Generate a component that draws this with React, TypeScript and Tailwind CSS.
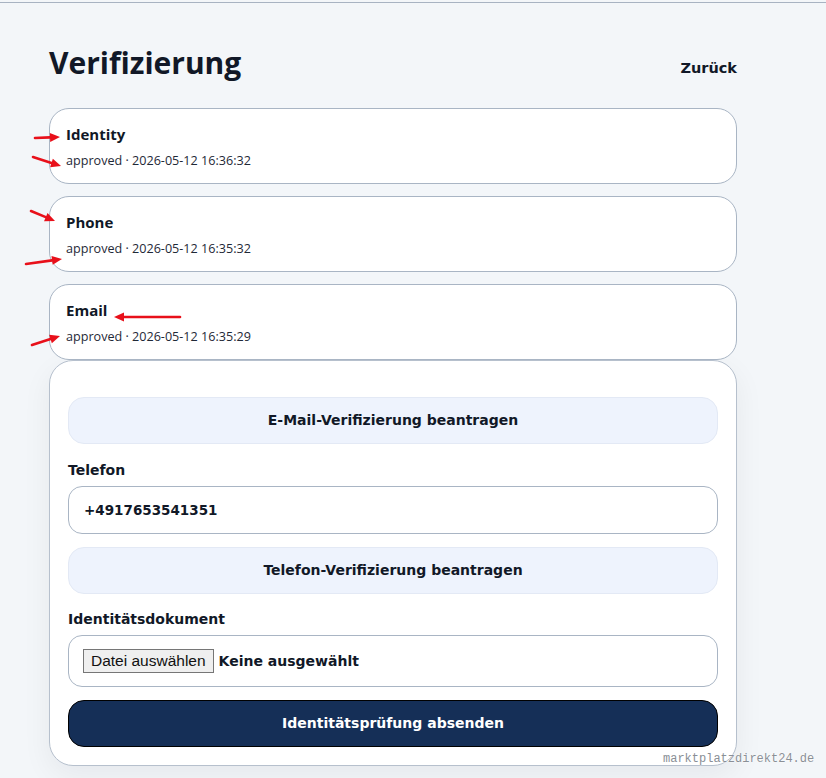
import React from 'react';

type Check = { kind: string; status: string; at: string };

const checks: Check[] = [
  { kind: 'Identity', status: 'approved', at: '2026-05-12 16:36:32' },
  { kind: 'Phone', status: 'approved', at: '2026-05-12 16:35:32' },
  { kind: 'Email', status: 'approved', at: '2026-05-12 16:35:29' },
];

const sans = "font-['Open_Sans','Noto_Sans',sans-serif]";
const tahoma = "font-['DejaVu_Sans','Liberation_Sans',sans-serif]";

// red markers drawn over the list
const arrows: [number, number, number, number][] = [
  [35, 138, 60, 137],
  [33, 157, 61, 166],
  [31, 211, 55, 221],
  [26, 264, 62, 259],
  [180, 317, 114, 317],
  [32, 345, 60, 336],
];

function Arrow({ x1, y1, x2, y2 }: { x1: number; y1: number; x2: number; y2: number }) {
  const a = Math.atan2(y2 - y1, x2 - x1);
  const len = 10;
  const w = 4.5;
  const bx = x2 - Math.cos(a) * len;
  const by = y2 - Math.sin(a) * len;
  const px = -Math.sin(a) * w;
  const py = Math.cos(a) * w;
  return (
    <g>
      <line x1={x1} y1={y1} x2={bx} y2={by} stroke="#e8101a" strokeWidth={2.6} strokeLinecap="round" />
      <polygon points={`${x2},${y2} ${bx + px},${by + py} ${bx - px},${by - py}`} fill="#e8101a" />
    </g>
  );
}

function StatusCard({ check }: { check: Check }) {
  return (
    <div className="rounded-[20px] border border-[#a9b5c4] bg-white px-4 pt-[14px] pb-[13px]">
      <div className={`${sans} text-[15px] font-bold leading-[22px] text-[#111827]`}>{check.kind}</div>
      <div className={`${sans} mt-[7px] text-[12.6px] leading-[18px] text-[#1f2937]`}>
        {check.status} · {check.at}
      </div>
    </div>
  );
}

function SoftButton({ children }: { children: React.ReactNode }) {
  return (
    <button
      type="button"
      className={`${tahoma} h-[47px] w-full rounded-[16px] border border-[#e3e9f5] bg-[#eef3fd] text-[14px] font-bold text-[#111827]`}
    >
      {children}
    </button>
  );
}

export default function App() {
  return (
    <div className="relative min-h-[778px] bg-[#f3f6f9]">
      <div className="h-[2px]" />
      <div className="h-px bg-[#a8b3c2]" />

      <div className="ml-[49px] w-[688px] pt-[40px]">
        <div className="flex items-center justify-between">
          <h1 className={`${sans} text-[30px] font-bold leading-[40px] text-[#111827]`}>Verifizierung</h1>
          <a className={`${tahoma} mt-[12px] text-[14.5px] font-bold text-[#111827]`}>Zurück</a>
        </div>

        <div className="mt-[25px] flex flex-col gap-[12px]">
          {checks.map((c) => (
            <StatusCard key={c.kind} check={c} />
          ))}
        </div>

        <div className="mt-0 rounded-[24px] border border-[#b6c0cd] bg-white px-[18px] pt-[36px] pb-[18px] shadow-[0_10px_30px_rgba(15,23,42,0.06)]">
          <SoftButton>E-Mail-Verifizierung beantragen</SoftButton>

          <label className={`${tahoma} mt-[15px] block text-[14px] font-bold leading-[22px] text-[#111827]`}>Telefon</label>
          <div className="mt-[5px] flex h-[48px] items-center rounded-[14px] border border-[#a9b5c4] bg-white px-[15px]">
            <span className={`${tahoma} text-[13.5px] font-bold text-[#111827]`}>+4917653541351</span>
          </div>

          <div className="mt-[13px]">
            <SoftButton>Telefon-Verifizierung beantragen</SoftButton>
          </div>

          <label className={`${tahoma} mt-[14px] block text-[14px] font-bold leading-[22px] text-[#111827]`}>Identitätsdokument</label>
          <div className="mt-[5px] flex h-[52px] items-center gap-[5px] rounded-[14px] border border-[#a9b5c4] bg-white px-[14px]">
            <span className="flex h-[24px] items-center border border-[#767676] bg-[#efefef] px-[7px] font-['Liberation_Sans',Arial,sans-serif] text-[15.5px] text-[#111]">
              Datei auswählen
            </span>
            <span className={`${tahoma} text-[14px] font-bold text-[#111827]`}>Keine ausgewählt</span>
          </div>

          <button
            type="button"
            className={`${tahoma} mt-[13px] h-[47px] w-full rounded-[16px] border border-black bg-[#152f57] text-[14px] font-bold text-white`}
          >
            Identitätsprüfung absenden
          </button>
        </div>
      </div>

      <span className="absolute left-[663px] top-[750px] font-['Liberation_Mono',monospace] text-[12px] text-[#8a8f96] [text-shadow:0_0_2px_#fff,0_0_1px_#fff]">
        marktplatzdirekt24.de
      </span>

      <svg className="pointer-events-none absolute left-0 top-0" width={826} height={778}>
        {arrows.map(([x1, y1, x2, y2], i) => (
          <Arrow key={i} x1={x1} y1={y1} x2={x2} y2={y2} />
        ))}
      </svg>
    </div>
  );
}
